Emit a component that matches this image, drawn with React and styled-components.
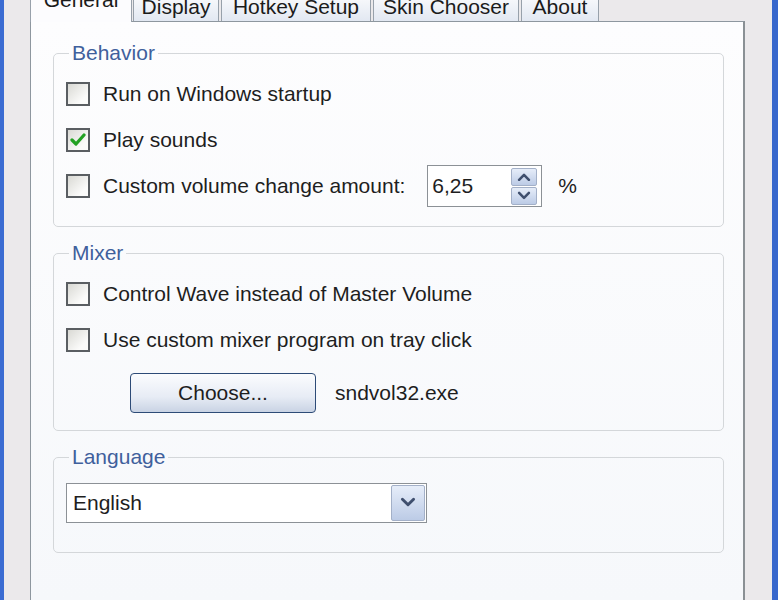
import styled, { createGlobalStyle } from 'styled-components';

const GlobalStyle = createGlobalStyle`
  html, body {
    margin: 0;
    padding: 0;
    overflow: hidden;
  }
  body {
    font-family: "Liberation Sans", Arial, sans-serif;
    background: #ebe9eb;
  }
`;

const tabs = [
  { label: 'General', width: 102 },
  { label: 'Display', width: 86 },
  { label: 'Hotkey Setup', width: 150 },
  { label: 'Skin Chooser', width: 146 },
  { label: 'About', width: 78 },
];

function Chevron({ up, size = 14 }) {
  return (
    <svg width={size} height={size * 0.7} viewBox="0 0 14 10">
      <path
        d={up ? 'M2 8 L7 3 L12 8' : 'M2 2 L7 7 L12 2'}
        fill="none"
        stroke="#3f4f6e"
        strokeWidth="2.6"
        strokeLinecap="round"
        strokeLinejoin="round"
      />
    </svg>
  );
}

function Check({ checked, children }) {
  return (
    <Row>
      <Box>
        {checked && (
          <svg width="16" height="14" viewBox="0 0 16 14">
            <path
              d="M2 7 L6 11 L14 2"
              fill="none"
              stroke="#22a122"
              strokeWidth="3.2"
              strokeLinecap="round"
              strokeLinejoin="round"
            />
          </svg>
        )}
      </Box>
      {children}
    </Row>
  );
}

function App() {
  return (
    <>
      <GlobalStyle />
      <Window>
        <TabStrip>
          {tabs.map((t, i) => (
            <Tab key={t.label} $active={i === 0} $w={t.width}>
              {t.label}
            </Tab>
          ))}
        </TabStrip>
        <Panel>
          <Group>
            <Legend>Behavior</Legend>
            <Check>Run on Windows startup</Check>
            <Check checked>Play sounds</Check>
            <Row>
              <Box />
              Custom volume change amount:
              <Spinner>
                <SpinText>6,25</SpinText>
                <SpinButtons>
                  <ArrowButton $h={18}>
                    <Chevron up />
                  </ArrowButton>
                  <ArrowButton $h={18}>
                    <Chevron />
                  </ArrowButton>
                </SpinButtons>
              </Spinner>
              <Unit>%</Unit>
            </Row>
          </Group>

          <Group>
            <Legend>Mixer</Legend>
            <Check>Control Wave instead of Master Volume</Check>
            <Check>Use custom mixer program on tray click</Check>
            <ButtonRow>
              <Button>Choose...</Button>
              <FileName>sndvol32.exe</FileName>
            </ButtonRow>
          </Group>

          <Group $bottom={29}>
            <Legend>Language</Legend>
            <Select>
              <SelectText>English</SelectText>
              <ArrowButton $h={36} $w={34}>
                <Chevron size={16} />
              </ArrowButton>
            </Select>
          </Group>
        </Panel>
      </Window>
    </>
  );
}

const Window = styled.div`
  box-sizing: border-box;
  width: 778px;
  height: 600px;
  border-left: 4px solid #3b6cd2;
  border-right: 6px solid #3767cc;
  background: #ebe9eb;
  padding: 0 27px 0 26px;
  display: flex;
  flex-direction: column;
  overflow: hidden;
`;

const TabStrip = styled.div`
  display: flex;
  align-items: flex-end;
  gap: 2px;
  height: 30px;
  margin-top: -9px;
  position: relative;
  z-index: 1;
  flex-shrink: 0;
`;

const Tab = styled.div`
  box-sizing: border-box;
  width: ${(p) => p.$w}px;
  height: ${(p) => (p.$active ? 38 : 30)}px;
  padding-bottom: ${(p) => (p.$active ? 7 : 0)}px;
  margin-bottom: ${(p) => (p.$active ? -1 : 0)}px;
  margin-right: ${(p) => (p.$active ? -1 : 0)}px;
  display: flex;
  align-items: center;
  justify-content: center;
  border: 1px solid #98a1ab;
  border-bottom: none;
  border-radius: 3px 3px 0 0;
  background: ${(p) =>
    p.$active ? '#fcfcfe' : 'linear-gradient(#fdfdfe, #e2e8f2)'};
  font-size: 21px;
  color: #1b1b1b;
  white-space: nowrap;
`;

const Panel = styled.div`
  flex: 1;
  border: 1px solid #8e979f;
  border-right: 2px solid #8a9094;
  border-bottom: none;
  background: linear-gradient(#fdfdfe, #f6f8fb);
  padding: 20px 19px 0 22px;
`;

const Group = styled.fieldset`
  margin: 0 0 15px;
  padding: 7px 12px ${(p) => p.$bottom ?? 17}px;
  border: 1px solid #d4d7da;
  border-radius: 5px;
  min-width: 0;
`;

const Legend = styled.legend`
  padding: 0 3px;
  margin-left: 3px;
  font-size: 21px;
  line-height: 22px;
  color: #40609c;
`;

const Row = styled.div`
  display: flex;
  align-items: center;
  height: 46px;
  font-size: 21px;
  color: #1e1e1e;
  white-space: nowrap;
`;

const Box = styled.span`
  box-sizing: border-box;
  width: 24px;
  height: 24px;
  flex-shrink: 0;
  border: 2px solid #5a5e62;
  background: linear-gradient(135deg, #d9d9d4, #fbfbfa 75%);
  margin-right: 13px;
  display: flex;
  align-items: center;
  justify-content: center;
`;

const Spinner = styled.div`
  box-sizing: border-box;
  margin-left: 22px;
  width: 115px;
  height: 42px;
  border: 1px solid #8c9196;
  background: #fff;
  display: flex;
  align-items: center;
  padding: 0 4px 0 4px;
`;

const SpinText = styled.span`
  flex: 1;
  font-size: 21px;
`;

const SpinButtons = styled.div`
  display: flex;
  flex-direction: column;
  gap: 1px;
`;

const ArrowButton = styled.div`
  box-sizing: border-box;
  width: ${(p) => p.$w ?? 26}px;
  height: ${(p) => p.$h}px;
  border: 1px solid #a3b0c8;
  border-radius: 2px;
  background: linear-gradient(#e6edf9, #bccbe6);
  display: flex;
  align-items: center;
  justify-content: center;
`;

const Unit = styled.span`
  margin-left: 16px;
`;

const ButtonRow = styled.div`
  display: flex;
  align-items: center;
  margin-top: 10px;
  padding-left: 64px;
`;

const Button = styled.div`
  box-sizing: border-box;
  width: 186px;
  height: 40px;
  border: 1px solid #2d4b77;
  border-radius: 4px;
  background: linear-gradient(#fbfcfe, #e7ecf5 60%, #c9d3e4);
  display: flex;
  align-items: center;
  justify-content: center;
  font-size: 21px;
  color: #1e1e1e;
`;

const FileName = styled.span`
  margin-left: 19px;
  font-size: 21px;
  color: #1e1e1e;
`;

const Select = styled.div`
  box-sizing: border-box;
  margin-top: 8px;
  width: 361px;
  height: 40px;
  border: 1px solid #8c9196;
  background: #fff;
  display: flex;
  align-items: center;
  padding: 1px 1px 1px 6px;
`;

const SelectText = styled.span`
  flex: 1;
  font-size: 21px;
  color: #1e1e1e;
`;

export default App;
